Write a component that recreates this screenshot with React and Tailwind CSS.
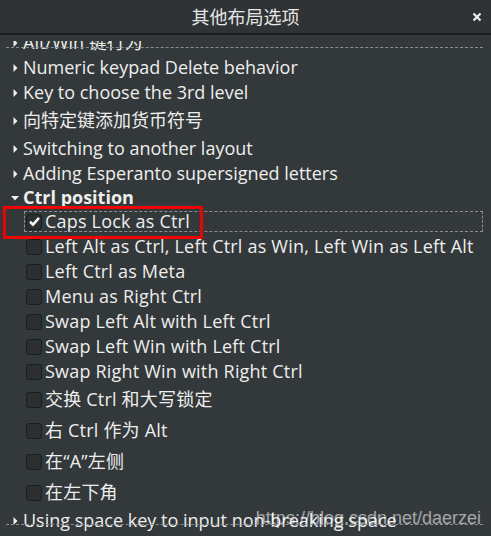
const LATIN = '"Open Sans", "Noto Sans CJK SC", sans-serif'

function Arrow({ open }) {
  if (open) {
    return (
      <svg width="10" height="8" viewBox="0 0 10 8" className="shrink-0">
        <path d="M1 2 L9 2 L5 6.5 Z" fill="#eeeeec" />
      </svg>
    )
  }
  return (
    <svg width="8" height="10" viewBox="0 0 8 10" className="shrink-0">
      <path d="M2.5 1 L6.5 5 L2.5 9 Z" fill="#eeeeec" />
    </svg>
  )
}

function Box({ checked }) {
  return (
    <span className="flex h-[16px] w-[16px] shrink-0 items-center justify-center rounded-[3px] border border-[#1b1e1f] bg-[#2b2f31]">
      {checked && (
        <svg width="13" height="13" viewBox="0 0 13 13">
          <path d="M2 6.8 L5 9.6 L11 2.8" fill="none" stroke="#f4f4f4" strokeWidth="2.6" />
        </svg>
      )}
    </span>
  )
}

function Group({ label, cjk, open, bold, tight }) {
  const h = cjk ? 'h-[31px]' : tight ? 'h-[23px]' : 'h-[25px]'
  return (
    <div className={`flex items-center gap-[3px] pl-[10px] ${h}`}>
      <span className="flex w-[10px] justify-center">
        <Arrow open={open} />
      </span>
      <span className={bold ? 'font-bold' : ''}>{label}</span>
    </div>
  )
}

function Option({ label, cjk, checked, focused }) {
  return (
    <div className={`relative flex items-center gap-[3px] pl-[26px] ${cjk ? 'h-[31px]' : 'h-[25px]'}`}>
      {focused && (
        <div className="absolute left-[24px] right-[8px] top-[1.5px] h-[21px] border border-dashed border-[#8a8e90]" />
      )}
      <Box checked={checked} />
      <span className="tracking-[0.2px]">{label}</span>
    </div>
  )
}

export default function App() {
  return (
    <div
      className="relative flex h-[536px] w-[491px] flex-col overflow-hidden bg-[#33383b] text-[18px] text-[#eeeeec]"
      style={{ fontFamily: LATIN }}
    >
      <div className="relative flex h-[35px] shrink-0 items-center justify-center border-b-2 border-[#1c1f21] bg-[#2f3336]">
        <span className="text-[18px] text-[#e6e6e4]" style={{ fontFamily: '"Noto Sans CJK SC", sans-serif' }}>
          其他布局选项
        </span>
        <svg width="10" height="10" viewBox="0 0 10 10" className="absolute right-[9px] top-[12px]">
          <path d="M1.5 1.5 L8.5 8.5 M8.5 1.5 L1.5 8.5" stroke="#eeeeec" strokeWidth="2.2" />
        </svg>
      </div>

      <div className="flex flex-1 flex-col pb-[8px] pt-[6px]">
        <div className="flex-1 overflow-hidden">
          <div className="-mt-[11px] flex flex-col">
            <Group label="Alt/Win 键行为" />
            <Group label="Numeric keypad Delete behavior" />
            <Group label="Key to choose the 3rd level" />
            <Group label="向特定键添加货币符号" cjk />
            <Group label="Switching to another layout" />
            <Group label="Adding Esperanto supersigned letters" />
            <Group label="Ctrl position" open bold tight />
            <Option label="Caps Lock as Ctrl" checked focused />
            <Option label="Left Alt as Ctrl, Left Ctrl as Win, Left Win as Left Alt" />
            <Option label="Left Ctrl as Meta" />
            <Option label="Menu as Right Ctrl" />
            <Option label="Swap Left Alt with Left Ctrl" />
            <Option label="Swap Left Win with Left Ctrl" />
            <Option label="Swap Right Win with Right Ctrl" />
            <Option label="交换 Ctrl 和大写锁定" cjk />
            <Option label="右 Ctrl 作为 Alt" cjk />
            <Option label="在“A”左侧" cjk />
            <Option label="在左下角" cjk />
            <Group label="Using space key to input non-breaking space" />
          </div>
        </div>
      </div>

      {/* undershoot dashes of the scrolled view */}
      <div className="absolute left-[6px] right-[8px] top-[47px] border-t border-dashed border-[#8a8e90]" />
      <div className="absolute left-[6px] right-[8px] top-[524px] border-t border-dashed border-[#8a8e90]" />

      {/* annotation box */}
      <div className="absolute left-[3px] top-[206px] h-[33px] w-[200px] border-[3px] border-[#f00000]" />

      <span
        className="absolute right-[10px] top-[507px] whitespace-nowrap text-[18px] leading-[22px] text-white/55"
        style={{ fontFamily: '"Liberation Sans", sans-serif' }}
      >
        https://blog.csdn.net/daerzei
      </span>
    </div>
  )
}
